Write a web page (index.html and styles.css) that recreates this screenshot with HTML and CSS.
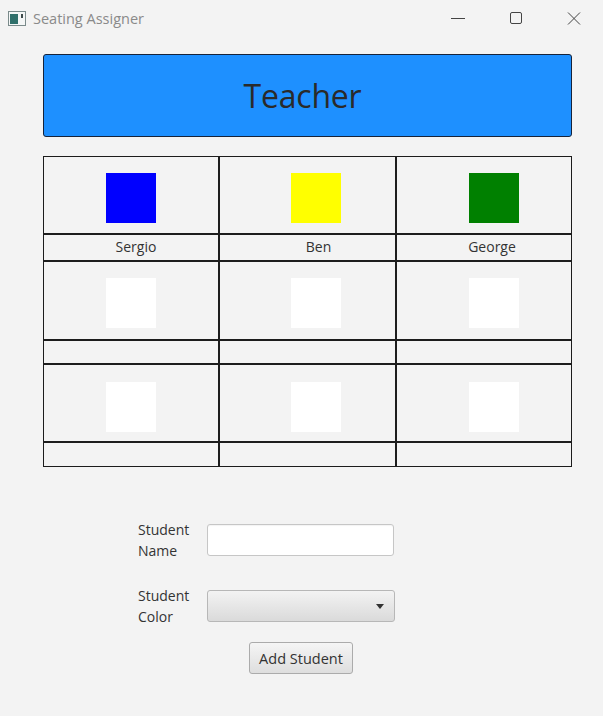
FILE: index.html
```html
<!DOCTYPE html>
<html>
<head>
<meta charset="utf-8">
<link rel="stylesheet" href="styles.css">
</head>
<body>
<div class="titlebar">
  <svg class="app-icon" width="18" height="15" viewBox="0 0 18 15">
    <rect x="0.5" y="0.5" width="17" height="14" fill="#f4f6f6" stroke="#7a8a8a"/>
    <rect x="2" y="3" width="8" height="10" fill="#2f6f6a"/>
    <rect x="13" y="3" width="2" height="4" fill="#3d4a4a"/>
  </svg>
  <span class="title">Seating Assigner</span>
  <div class="controls">
    <svg class="ctl" width="58" height="36" viewBox="0 0 58 36"><line x1="22" y1="18.5" x2="36" y2="18.5" stroke="#444" stroke-width="1"/></svg>
    <svg class="ctl" width="58" height="36" viewBox="0 0 58 36"><rect x="23.5" y="12.5" width="11" height="11" rx="1.5" fill="none" stroke="#444" stroke-width="1"/></svg>
    <svg class="ctl" width="58" height="36" viewBox="0 0 58 36"><path d="M23 12.5 L35 24.5 M35 12.5 L23 24.5" stroke="#444" stroke-width="1"/></svg>
  </div>
</div>
<div class="main">
  <div class="teacher">Teacher</div>
  <div class="seats">
    <div class="cell img c1"><div class="sq blue"></div></div>
    <div class="cell img c2"><div class="sq yellow"></div></div>
    <div class="cell img c3"><div class="sq green"></div></div>
    <div class="cell name n1">Sergio</div>
    <div class="cell name n2">Ben</div>
    <div class="cell name n3">George</div>
    <div class="cell img c1"><div class="sq"></div></div>
    <div class="cell img c2"><div class="sq"></div></div>
    <div class="cell img c3"><div class="sq"></div></div>
    <div class="cell name"></div>
    <div class="cell name"></div>
    <div class="cell name"></div>
    <div class="cell img c1 r3"><div class="sq"></div></div>
    <div class="cell img c2 r3"><div class="sq"></div></div>
    <div class="cell img c3 r3"><div class="sq"></div></div>
    <div class="cell name"></div>
    <div class="cell name"></div>
    <div class="cell name"></div>
  </div>
  <div class="form">
    <div class="label">Student<br>Name</div>
    <div class="field"><input class="text-input" type="text"></div>
    <div class="label">Student<br>Color</div>
    <div class="field"><div class="combo"><span class="arrow"></span></div></div>
    <div class="btn-row"><button class="button">Add Student</button></div>
  </div>
</div>
</body>
</html>
```
FILE: styles.css
```css
html, body {
  margin: 0;
  padding: 0;
  background: #f3f3f3;
  font-family: "Open Sans", "Noto Sans", sans-serif;
  color: #333;
}
.titlebar {
  height: 36px;
  display: flex;
  align-items: center;
}
.app-icon {
  margin-left: 8px;
  margin-top: 1px;
}
.title {
  margin-left: 7px;
  font-size: 14.5px;
  color: #8a8a8a;
}
.controls {
  margin-left: auto;
  display: flex;
}
.ctl {
  display: block;
  width: 58px;
  height: 36px;
}
.main {
  padding: 18px 31px 0 43px;
}
.teacher {
  width: 517px;
  height: 81px;
  background: #1e90ff;
  border: 1px solid #16233a;
  border-radius: 3px;
  display: flex;
  align-items: center;
  justify-content: center;
  box-sizing: content-box;
  font-size: 32px;
  color: #2a2a2a;
  letter-spacing: -0.2px;
  padding-right: 10px;
}
.seats {
  margin-top: 19px;
  width: 527px;
  border: 1px solid #1c1c1c;
  background: #1c1c1c;
  display: grid;
  grid-template-columns: 174px 175px 174px;
  grid-template-rows: 76px 25px 77px 22px 76px 23px;
  gap: 2px;
}
.cell {
  background: #f3f3f3;
}
.img {
  display: flex;
  justify-content: center;
  padding-top: 16px;
  box-sizing: border-box;
}
.c1 { padding-left: 0; }
.c2 { padding-left: 16px; }
.c3 { padding-left: 20px; }
.r3 {
  padding-top: 17px;
}
.sq {
  width: 50px;
  height: 50px;
  background: #ffffff;
}
.blue { background: #0000ff; }
.yellow { background: #ffff00; }
.green { background: #008000; }
.name {
  display: flex;
  align-items: center;
  justify-content: center;
  font-size: 14px;
  color: #333;
  padding-bottom: 2px;
  box-sizing: border-box;
}
.n1 { padding-left: 10px; }
.n2 { padding-left: 22px; }
.n3 { padding-left: 16px; }
.form {
  margin-top: 52px;
  margin-left: 95px;
  display: grid;
  grid-template-columns: 69px 188px;
  row-gap: 24px;
  align-items: center;
}
.label {
  font-size: 14px;
  line-height: 21px;
  color: #333;
}
.field {
  display: flex;
}
.text-input {
  width: 187px;
  height: 32px;
  box-sizing: border-box;
  border: 1px solid #c6c6c6;
  border-radius: 3px;
  background: #fff;
  margin: 0;
  padding: 0 6px;
  outline: none;
  box-shadow: inset 0 1px 1px rgba(0,0,0,0.05);
}
.combo {
  width: 188px;
  height: 32px;
  box-sizing: border-box;
  border: 1px solid #b7b7b7;
  border-radius: 3px;
  background: linear-gradient(#f3f3f3, #dadada);
  display: flex;
  align-items: center;
  justify-content: flex-end;
  padding-right: 10px;
}
.arrow {
  width: 0;
  height: 0;
  border-left: 4.5px solid transparent;
  border-right: 4.5px solid transparent;
  border-top: 5px solid #333;
}
.btn-row {
  grid-column: 2;
  display: flex;
  justify-content: center;
  margin-top: -9px;
}
.button {
  width: 104px;
  height: 32px;
  box-sizing: border-box;
  border: 1px solid #ababab;
  border-radius: 3px;
  background: linear-gradient(#f5f5f5, #dedede);
  font-family: "Open Sans", "Noto Sans", sans-serif;
  font-size: 14.5px;
  color: #333;
  padding: 0;
  margin: 0;
}
```
